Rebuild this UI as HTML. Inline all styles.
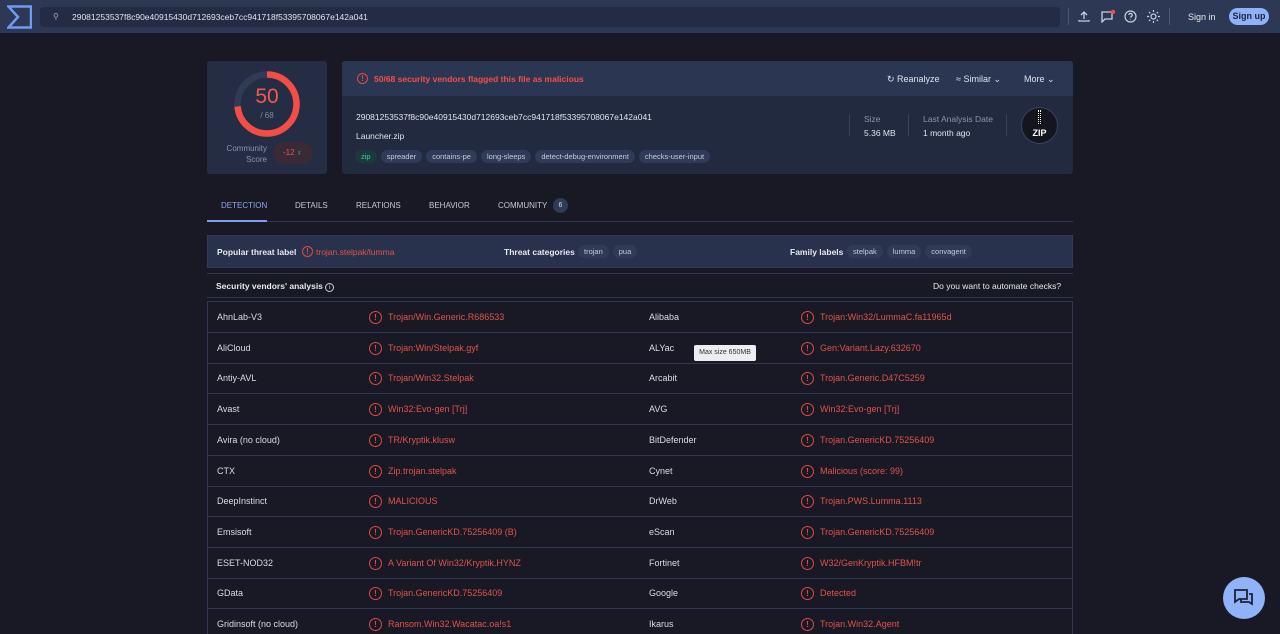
<!DOCTYPE html><html><head><meta charset="utf-8"><style>
*{box-sizing:border-box;margin:0;padding:0}
html,body{width:1280px;height:634px;overflow:hidden}
body{background:#181925;font-family:"Liberation Sans",sans-serif;color:#d8dce6;position:relative;font-size:9px}
.a{position:absolute}
.nav{left:0;top:0;width:1280px;height:33px;background:#2c3854}
.search{left:40px;top:7px;width:1020px;height:20px;background:#232c44;border-radius:4px}
.red{color:#ee5148}
.ic{display:inline-block;width:11px;height:11px;border:1.3px solid #e04a42;border-radius:50%;color:#e04a42;font-size:8px;line-height:9px;text-align:center;font-weight:bold}
.tag{display:inline-block;background:#2f3b57;color:#c6cbd8;border-radius:8px;padding:2px 6px;font-size:7.5px;margin-right:4px}
.row{position:absolute;left:208px;width:865px;height:31px;border-bottom:1px solid #2f3752;font-size:9px}
.row span{position:absolute;top:10px}
</style></head><body>
<div class="a nav"></div>
<svg class="a" style="left:7px;top:5px" width="25" height="24"><path d="M1.5 1.5H24V22.5H1.5L11 12Z" fill="none" stroke="#6e9bf5" stroke-width="2.5"/></svg>
<div class="a search"></div>
<div class="a" style="left:53px;top:12px;font-size:8px;color:#aab">&#9906;</div>
<div class="a" style="left:72px;top:12px;font-size:8.5px;color:#e0e4ec">29081253537f8c90e40915430d712693ceb7cc941718f53395708067e142a041</div>
<div class="a" style="left:1068px;top:8px;width:1px;height:17px;background:#4a5677"></div>
<div class="a" style="left:1169px;top:8px;width:1px;height:17px;background:#4a5677"></div>
<svg class="a" style="left:1078px;top:10px" width="12" height="12" fill="none" stroke="#c8cfe0" stroke-width="1.3"><path d="M6 9V2M3 5l3-3 3 3M1 10v1h10v-1"/></svg>
<svg class="a" style="left:1100px;top:9px" width="16" height="14" fill="none" stroke="#c8cfe0" stroke-width="1.3"><path d="M2 3h10v7H5l-3 3z"/><circle cx="13" cy="3" r="2.2" fill="#ee5148" stroke="none"/></svg>
<svg class="a" style="left:1124px;top:10px" width="13" height="13" fill="none" stroke="#c8cfe0" stroke-width="1.2"><circle cx="6.5" cy="6.5" r="5.5"/><path d="M5 5a1.6 1.6 0 1 1 2 1.5v1.2M6.5 9.5v.5"/></svg>
<svg class="a" style="left:1147px;top:10px" width="13" height="13" fill="none" stroke="#c8cfe0" stroke-width="1.2"><circle cx="6.5" cy="6.5" r="2.5"/><path d="M6.5 0v2M6.5 11v2M0 6.5h2M11 6.5h2M2 2l1.3 1.3M9.7 9.7L11 11M2 11l1.3-1.3M9.7 3.3L11 2"/></svg>
<div class="a" style="left:1188px;top:12px;font-size:9px;color:#e6e9f0">Sign in</div>
<div class="a" style="left:1229px;top:8px;width:40px;height:17px;border-radius:9px;background:#8fb1f7;color:#1b2540;font-size:9px;font-weight:bold;text-align:center;line-height:17px">Sign up</div>

<div class="a" style="left:207px;top:61px;width:120px;height:113px;background:#242d44;border-radius:3px"></div>
<svg class="a" style="left:232px;top:69px" width="70" height="70"><circle cx="35" cy="35" r="29.5" fill="none" stroke="#2f3b57" stroke-width="6.5"/><circle cx="35" cy="35" r="29.5" fill="none" stroke="#f24e46" stroke-width="6.5" stroke-dasharray="136.3 185.4" transform="rotate(-90 35 35)"/></svg>
<div class="a red" style="left:248px;top:85px;width:38px;text-align:center;font-size:21px;color:#f2584e">50</div>
<div class="a" style="left:248px;top:111px;width:38px;text-align:center;font-size:8px;color:#8089a0">/ 68</div>
<div class="a" style="left:217px;top:143px;width:50px;text-align:right;font-size:8px;color:#8c94aa;line-height:11px">Community<br>Score</div>
<div class="a" style="left:273px;top:142px;width:40px;height:22px;border-radius:11px;background:#3a2a36;color:#e0584e;font-size:8px;line-height:22px;padding-left:10px">-12 <span style="color:#555d74;font-size:6px">⬍</span></div>

<div class="a" style="left:342px;top:61px;width:731px;height:113px;background:#222a40;border-radius:3px;overflow:hidden"><div style="height:35px;background:#2b3653"></div></div>
<div class="a" style="left:357px;top:73px"><span class="ic">!</span></div>
<div class="a red" style="left:374px;top:74px;font-size:8.5px;font-weight:bold;color:#ee5148">50/68 security vendors flagged this file as malicious</div>
<div class="a" style="left:887px;top:74px;font-size:9px;color:#dfe3ec">↻ Reanalyze</div>
<div class="a" style="left:956px;top:74px;font-size:9px;color:#dfe3ec">≈ Similar ⌄</div>
<div class="a" style="left:1024px;top:74px;font-size:9px;color:#dfe3ec">More ⌄</div>
<div class="a" style="left:356px;top:112px;font-size:8.5px;color:#e0e4ec">29081253537f8c90e40915430d712693ceb7cc941718f53395708067e142a041</div>
<div class="a" style="left:356px;top:131px;font-size:8.5px;color:#e0e4ec">Launcher.zip</div>
<div class="a" style="left:355px;top:150px"><span class="tag" style="background:#1d3a3a;color:#4cc6a0">zip</span><span class="tag">spreader</span><span class="tag">contains-pe</span><span class="tag">long-sleeps</span><span class="tag">detect-debug-environment</span><span class="tag">checks-user-input</span></div>
<div class="a" style="left:849px;top:114px;width:1px;height:22px;background:#39435f"></div>
<div class="a" style="left:908px;top:114px;width:1px;height:22px;background:#39435f"></div>
<div class="a" style="left:1006px;top:114px;width:1px;height:22px;background:#39435f"></div>
<div class="a" style="left:864px;top:114px;font-size:8.5px;color:#8c94aa">Size</div>
<div class="a" style="left:864px;top:128px;font-size:8.5px;color:#e0e4ec">5.36 MB</div>
<div class="a" style="left:923px;top:114px;font-size:8.5px;color:#8c94aa">Last Analysis Date</div>
<div class="a" style="left:923px;top:128px;font-size:8.5px;color:#e0e4ec">1 month ago</div>
<div class="a" style="left:1021px;top:107px;width:37px;height:37px;border-radius:50%;background:#14151d;border:1px solid #39435f;color:#fff;font-weight:bold;font-size:9px;text-align:center;padding-top:20px">ZIP</div>
<div class="a" style="left:1038px;top:110px;width:3px;height:14px;border-left:1px dotted #fff;border-right:1px dotted #fff"></div>

<div class="a" style="left:207px;top:221px;width:866px;height:1px;background:#2f3752"></div>
<div class="a" style="left:207px;top:220px;width:60px;height:2px;background:#7a9ef0"></div>
<div class="a" style="left:221px;top:201px;font-size:8px;color:#8fa8ec">DETECTION</div>
<div class="a" style="left:295px;top:201px;font-size:8px;color:#c3c8d6">DETAILS</div>
<div class="a" style="left:356px;top:201px;font-size:8px;color:#c3c8d6">RELATIONS</div>
<div class="a" style="left:429px;top:201px;font-size:8px;color:#c3c8d6">BEHAVIOR</div>
<div class="a" style="left:498px;top:201px;font-size:8px;color:#c3c8d6">COMMUNITY</div>
<div class="a" style="left:553px;top:198px;width:15px;height:15px;border-radius:50%;background:#2f3b57;font-size:7px;text-align:center;line-height:15px">6</div>

<div class="a" style="left:207px;top:235px;width:866px;height:33px;background:#28324c;border:1px solid #323c58"></div>
<div class="a" style="left:217px;top:247px;font-size:8.5px;font-weight:bold;color:#e6e9f0">Popular threat label</div>
<div class="a" style="left:302px;top:246px"><span class="ic">!</span></div>
<div class="a red" style="left:316px;top:247px;font-size:8.5px;color:#e0534a">trojan.stelpak/lumma</div>
<div class="a" style="left:504px;top:247px;font-size:8.5px;font-weight:bold;color:#e6e9f0">Threat categories</div>
<div class="a" style="left:578px;top:245px"><span class="tag">trojan</span><span class="tag">pua</span></div>
<div class="a" style="left:790px;top:247px;font-size:8.5px;font-weight:bold;color:#e6e9f0">Family labels</div>
<div class="a" style="left:847px;top:245px"><span class="tag">stelpak</span><span class="tag">lumma</span><span class="tag">convagent</span></div>
<div class="a" style="left:207px;top:273px;width:866px;height:1px;background:#2f3752"></div>
<div class="a" style="left:216px;top:281px;font-size:8.5px;font-weight:bold;color:#e6e9f0">Security vendors' analysis <span style="display:inline-block;width:9px;height:9px;border:1px solid #ccd;border-radius:50%;font-size:6px;text-align:center;line-height:8px;font-weight:normal">i</span></div>
<div class="a" style="left:933px;top:281px;font-size:8.5px;color:#e6e9f0">Do you want to automate checks?</div>
<div class="a" style="left:207px;top:297px;width:866px;height:1px;background:#2f3752"></div>
<div class="a" style="left:207px;top:301px;width:866px;height:340px;border:1px solid #2f3752;border-bottom:none"></div>

<div id="rows"></div>
<div class="a" style="left:694px;top:345px;width:62px;height:16px;background:#eceef2;color:#333;font-size:7px;line-height:16px;text-align:center;border-radius:2px">Max size 650MB</div>
<div class="a" style="left:1223px;top:577px;width:42px;height:42px;border-radius:50%;background:#90b2f8"></div>
<svg class="a" style="left:1233px;top:588px" width="22" height="20" fill="none" stroke="#1a2238" stroke-width="1.8"><path d="M2 2h12v9H6l-4 3z"/><path d="M16 6h3v10l-3-2H8v-3"/></svg>
<script>
var d=[["AhnLab-V3","Trojan/Win.Generic.R686533","Alibaba","Trojan:Win32/LummaC.fa11965d"],["AliCloud","Trojan:Win/Stelpak.gyf","ALYac","Gen:Variant.Lazy.632670"],["Antiy-AVL","Trojan/Win32.Stelpak","Arcabit","Trojan.Generic.D47C5259"],["Avast","Win32:Evo-gen [Trj]","AVG","Win32:Evo-gen [Trj]"],["Avira (no cloud)","TR/Kryptik.klusw","BitDefender","Trojan.GenericKD.75256409"],["CTX","Zip.trojan.stelpak","Cynet","Malicious (score: 99)"],["DeepInstinct","MALICIOUS","DrWeb","Trojan.PWS.Lumma.1113"],["Emsisoft","Trojan.GenericKD.75256409 (B)","eScan","Trojan.GenericKD.75256409"],["ESET-NOD32","A Variant Of Win32/Kryptik.HYNZ","Fortinet","W32/GenKryptik.HFBM!tr"],["GData","Trojan.GenericKD.75256409","Google","Detected"],["Gridinsoft (no cloud)","Ransom.Win32.Wacatac.oa!s1","Ikarus","Trojan.Win32.Agent"]];
var h="";d.forEach(function(r,i){var t=302+i*30.7;h+='<div class="row" style="top:'+t+'px"><span style="left:9px">'+r[0]+'</span><span class="ic" style="left:161px;top:9px;width:13px;height:13px;line-height:11px">!</span><span style="left:180px;color:#e0534a">'+r[1]+'</span><span style="left:441px">'+r[2]+'</span><span class="ic" style="left:593px;top:9px;width:13px;height:13px;line-height:11px">!</span><span style="left:612px;color:#e0534a">'+r[3]+'</span></div>'});document.getElementById("rows").innerHTML=h;
</script>
</body></html>
